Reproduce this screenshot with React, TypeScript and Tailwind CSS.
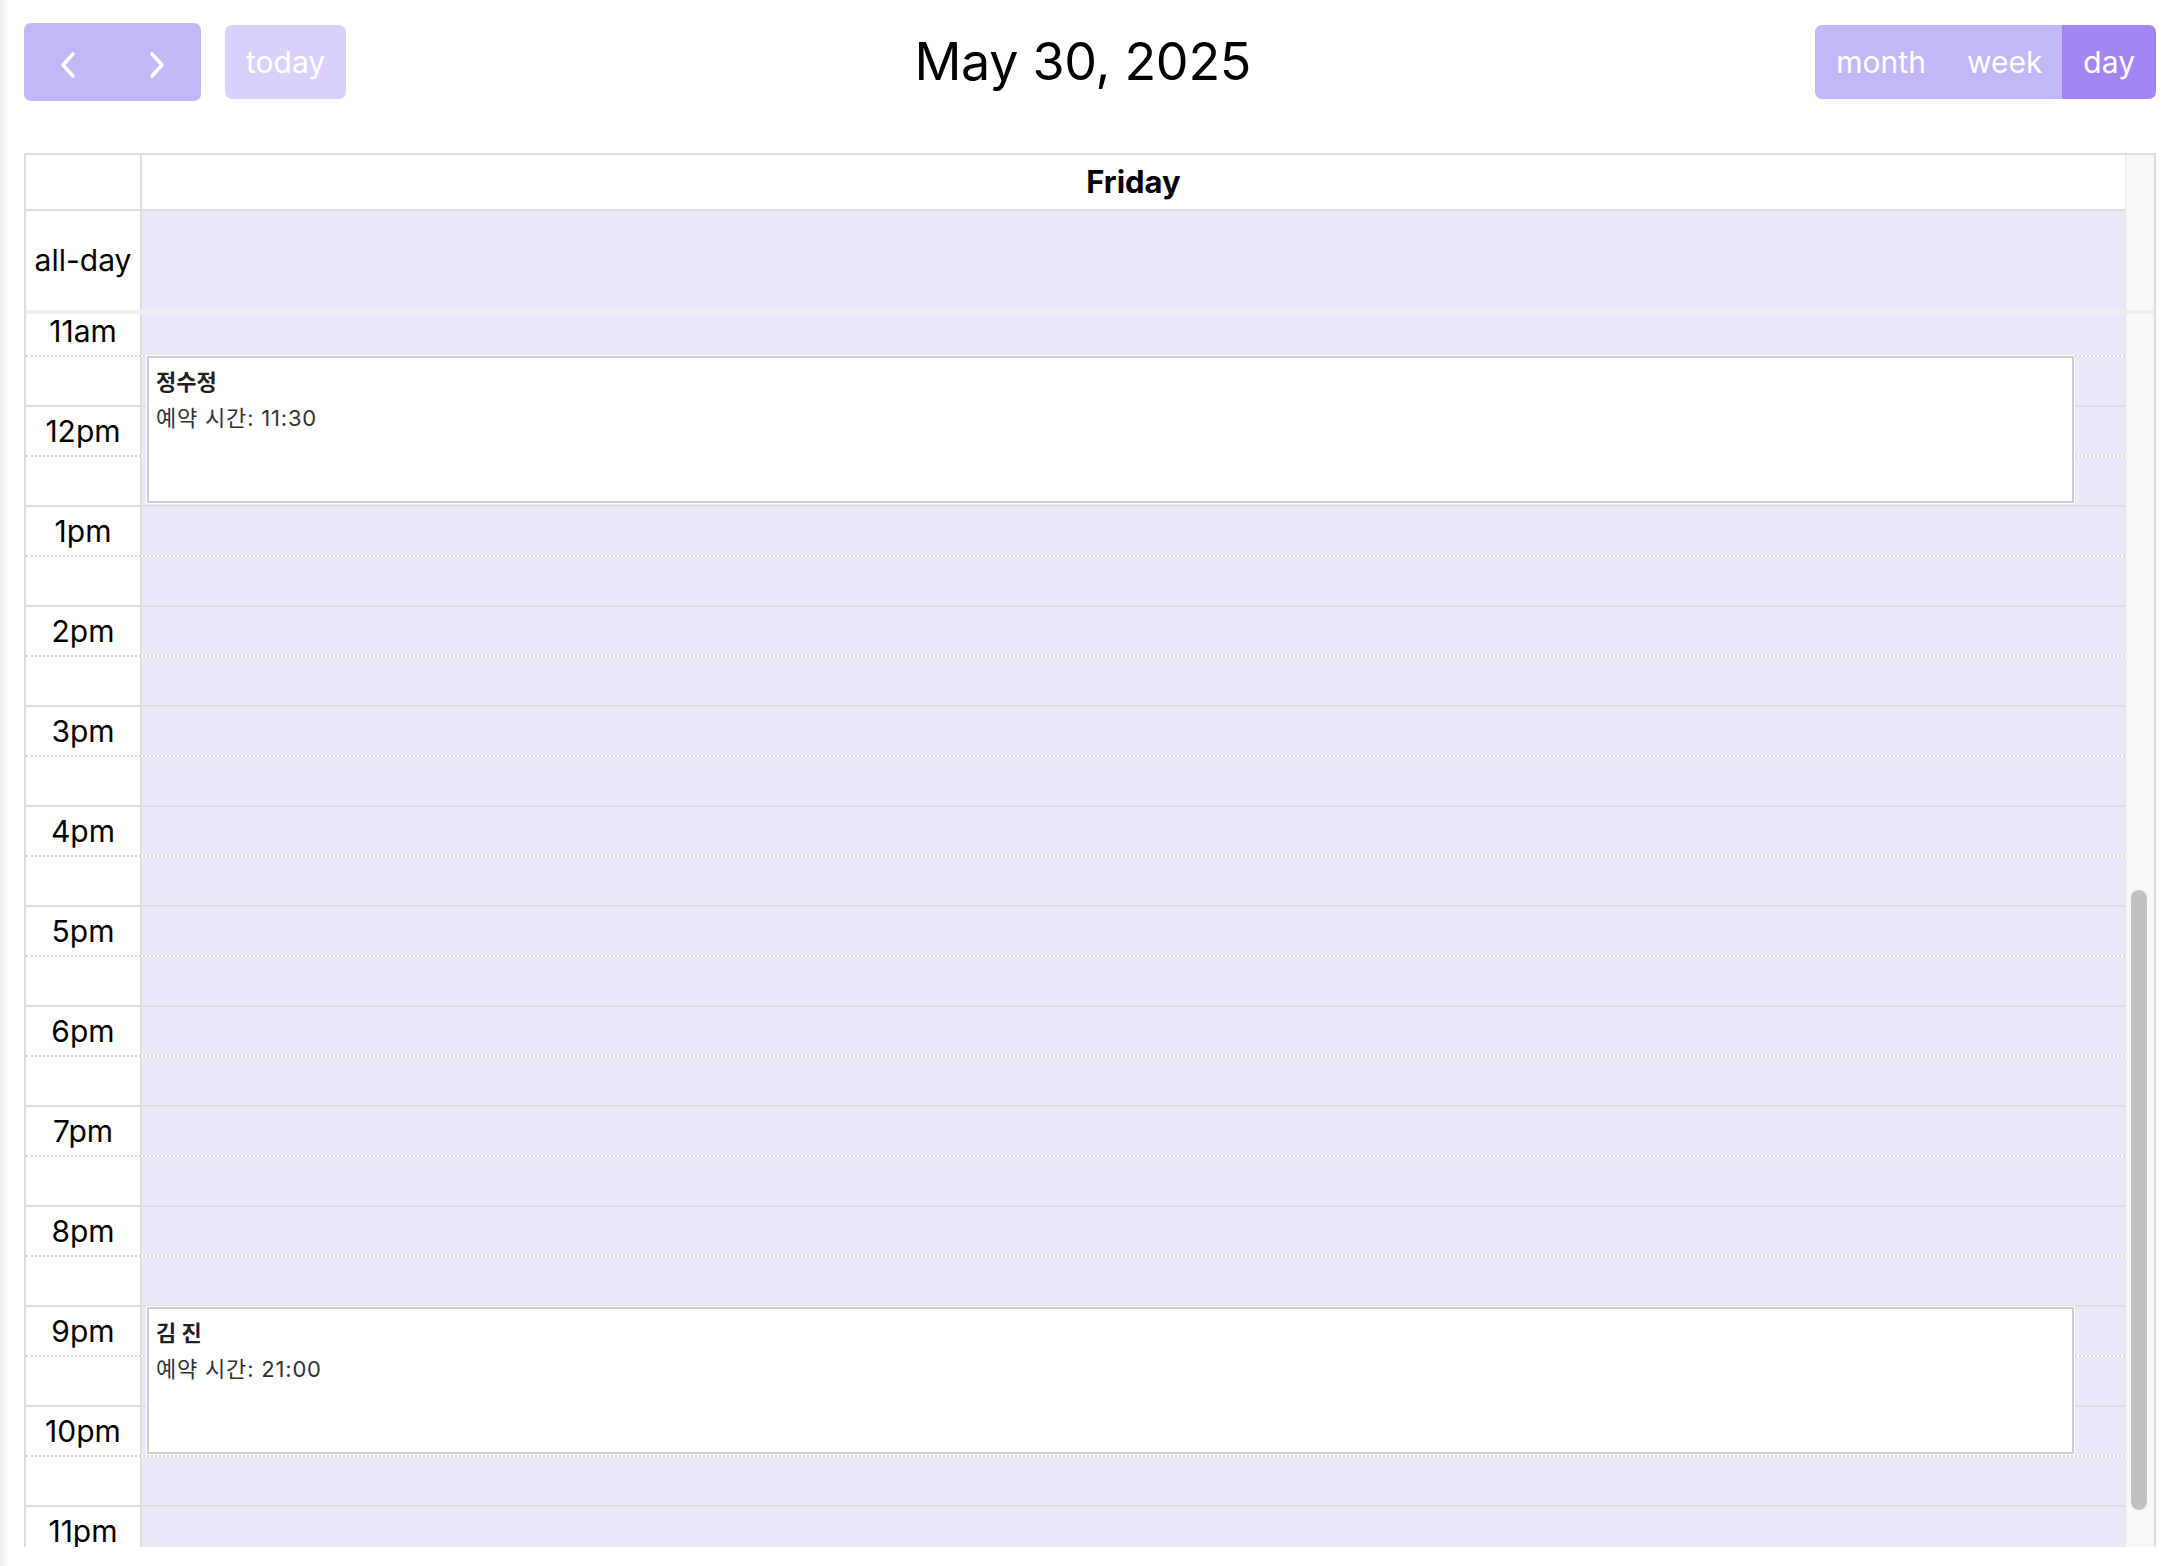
import React from "react";

const HOURS = ["11am", "12pm", "1pm", "2pm", "3pm", "4pm", "5pm", "6pm", "7pm", "8pm", "9pm", "10pm", "11pm"];

function Chevron({ dir }: { dir: "left" | "right" }) {
  return (
    <svg width="18" height="28" viewBox="0 0 18 28" fill="none">
      <polyline
        points={dir === "left" ? "14,3 4,14 14,25" : "4,3 14,14 4,25"}
        stroke="white"
        strokeWidth="3.6"
        strokeLinecap="round"
        strokeLinejoin="round"
      />
    </svg>
  );
}

function EventCard({ top, name, time }: { top: number; name: string; time: string }) {
  return (
    <div
      className="absolute left-[121px] right-[51px] h-[147px] border-2 border-[#cccccc] bg-white shadow-[0_0_0_1px_#ffffff] pl-[7px] pt-[11px]"
      style={{ top }}
    >
      <div className="text-[22px] leading-[26px] font-bold text-[#222]">{name}</div>
      <div className="mt-[10px] text-[22px] leading-[26px] tracking-[0.8px] text-[#333]">{time}</div>
    </div>
  );
}

export default function App() {
  return (
    <div className="relative h-[1566px] w-[2180px] overflow-hidden bg-[linear-gradient(to_right,#ebebeb,#ffffff_9px)] px-[24px] pt-[23px] font-['Inter','Noto_Sans_CJK_KR',sans-serif] text-black">
      {/* Toolbar */}
      <div className="flex h-[78px] items-center justify-between">
        <div className="flex items-center gap-[24px]">
          <div className="flex h-[78px] overflow-hidden rounded-[7px] bg-[#c2b7f8]">
            <div className="flex w-[88px] items-center justify-center pt-[5px]">
              <Chevron dir="left" />
            </div>
            <div className="flex w-[89px] items-center justify-center pt-[5px]">
              <Chevron dir="right" />
            </div>
          </div>
          <div className="flex h-[74px] items-center rounded-[7px] bg-[#d9d1fb] px-[21px] text-[30px] text-white">
            today
          </div>
        </div>
        <div className="pl-[4px] text-[52px] leading-none tracking-[-0.3px]">May 30, 2025</div>
        <div className="flex h-[74px] overflow-hidden rounded-[7px] text-[30px] text-white">
          <div className="flex items-center bg-[#c2b7f8] px-[21px]">month</div>
          <div className="flex items-center bg-[#c2b7f8] px-[20px]">week</div>
          <div className="flex items-center bg-[#a287f4] px-[21px]">day</div>
        </div>
      </div>

      {/* Calendar grid */}
      <div className="mt-[52px] w-[2132px] border-x-2 border-t-2 border-[#dddddd]">
        {/* Header */}
        <div className="flex h-[56px]">
          <div className="w-[116px] border-b-2 border-r-2 border-[#dddddd]" />
          <div className="flex flex-1 items-center justify-center border-b-2 border-[#dddddd] text-[31px] font-bold">
            Friday
          </div>
          <div className="w-[29px] border-l border-[#e8e8e8] bg-[#f8f8f8]" />
        </div>
        {/* All-day */}
        <div className="flex h-[99px]">
          <div className="flex w-[116px] items-center justify-center border-r-2 border-[#dddddd] text-[30px]">
            all-day
          </div>
          <div className="flex-1 bg-[#ebe8fb]" />
          <div className="w-[29px] border-l border-[#e8e8e8] bg-[#f8f8f8]" />
        </div>
        {/* Divider */}
        <div className="h-[4px] bg-[#efefef]" />
        {/* Time grid */}
        <div className="flex h-[1233px]">
          <div className="relative flex-1 overflow-hidden">
            <div className="-mt-[9px]">
              {HOURS.map((h) => (
                <div key={h}>
                  <div className="flex h-[50px] border-t-2 border-[#dddddd]">
                    <div className="flex w-[116px] items-center justify-center border-r-2 border-[#dddddd] text-[30px]">
                      {h}
                    </div>
                    <div className="flex-1 bg-[#ebe8fb]" />
                  </div>
                  <div className="flex h-[50px] border-t-2 border-dotted border-[#d6d6d6]">
                    <div className="w-[116px] border-r-2 border-solid border-[#dddddd]" />
                    <div className="flex-1 bg-[#ebe8fb]" />
                  </div>
                </div>
              ))}
            </div>
            <EventCard top={42} name="정수정" time="예약 시간: 11:30" />
            <EventCard top={993} name="김 진" time="예약 시간: 21:00" />
          </div>
          <div className="relative w-[29px] border-l border-[#e8e8e8] bg-[#f8f8f8]">
            <div className="absolute left-[5px] top-[576px] h-[620px] w-[16px] rounded-full bg-[#c1c1c1]" />
          </div>
        </div>
      </div>
    </div>
  );
}
